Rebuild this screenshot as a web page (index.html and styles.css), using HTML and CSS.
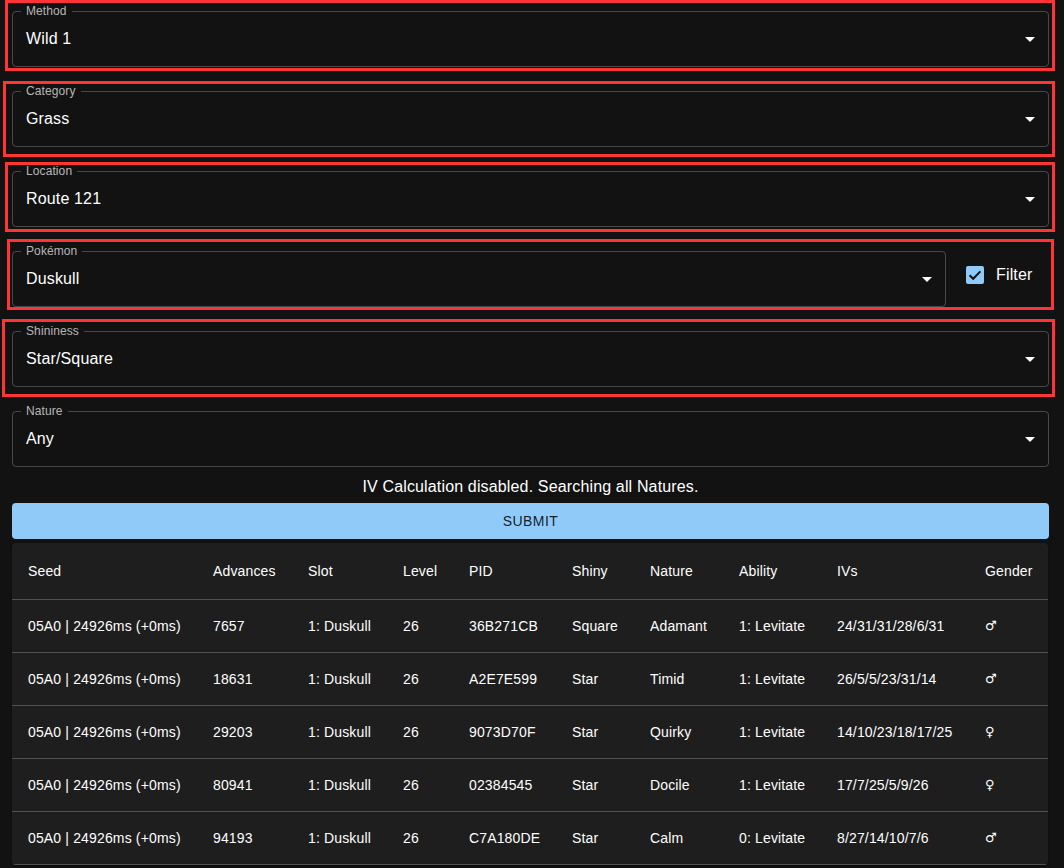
FILE: index.html
```html
<!DOCTYPE html>
<html lang="en">
<head>
<meta charset="utf-8">
<title>Wild Search</title>
<link rel="stylesheet" href="styles.css">
</head>
<body>
<main class="page">
  <div class="hl hl-1">
    <fieldset class="field">
      <legend>Method</legend>
      <div class="value">Wild 1</div>
      <svg class="arrow" viewBox="0 0 24 24"><path d="M7 10l5 5 5-5z"/></svg>
    </fieldset>
  </div>
  <div class="hl hl-2">
    <fieldset class="field">
      <legend>Category</legend>
      <div class="value">Grass</div>
      <svg class="arrow" viewBox="0 0 24 24"><path d="M7 10l5 5 5-5z"/></svg>
    </fieldset>
  </div>
  <div class="hl hl-3">
    <fieldset class="field">
      <legend>Location</legend>
      <div class="value">Route 121</div>
      <svg class="arrow" viewBox="0 0 24 24"><path d="M7 10l5 5 5-5z"/></svg>
    </fieldset>
  </div>
  <div class="hl hl-4">
    <div class="row">
      <fieldset class="field field-narrow">
        <legend>Pokémon</legend>
        <div class="value">Duskull</div>
        <svg class="arrow" viewBox="0 0 24 24"><path d="M7 10l5 5 5-5z"/></svg>
      </fieldset>
      <label class="check">
        <svg class="box" viewBox="0 0 18 18"><rect x="0" y="0" width="18" height="18" rx="2" fill="#90caf9"/><path d="M3.6 9.2l3.6 3.6 7.2-7.4" fill="none" stroke="#121212" stroke-width="2"/></svg>
        <span>Filter</span>
      </label>
    </div>
  </div>
  <div class="hl hl-5">
    <fieldset class="field">
      <legend>Shininess</legend>
      <div class="value">Star/Square</div>
      <svg class="arrow" viewBox="0 0 24 24"><path d="M7 10l5 5 5-5z"/></svg>
    </fieldset>
  </div>
  <fieldset class="field nature">
    <legend>Nature</legend>
    <div class="value">Any</div>
    <svg class="arrow" viewBox="0 0 24 24"><path d="M7 10l5 5 5-5z"/></svg>
  </fieldset>
  <p class="info">IV Calculation disabled. Searching all Natures.</p>
  <button class="submit">Submit</button>
  <div class="paper">
    <table class="results">
      <colgroup>
        <col class="c-seed"><col class="c-adv"><col class="c-slot"><col class="c-level"><col class="c-pid">
        <col class="c-shiny"><col class="c-nature"><col class="c-ability"><col class="c-ivs"><col class="c-gender">
      </colgroup>
      <thead>
        <tr><th>Seed</th><th>Advances</th><th>Slot</th><th>Level</th><th>PID</th><th>Shiny</th><th>Nature</th><th>Ability</th><th>IVs</th><th>Gender</th></tr>
      </thead>
      <tbody>
        <tr><td>05A0 | 24926ms (+0ms)</td><td>7657</td><td>1: Duskull</td><td>26</td><td>36B271CB</td><td>Square</td><td>Adamant</td><td>1: Levitate</td><td>24/31/31/28/6/31</td><td class="g">♂</td></tr>
        <tr><td>05A0 | 24926ms (+0ms)</td><td>18631</td><td>1: Duskull</td><td>26</td><td>A2E7E599</td><td>Star</td><td>Timid</td><td>1: Levitate</td><td>26/5/5/23/31/14</td><td class="g">♂</td></tr>
        <tr><td>05A0 | 24926ms (+0ms)</td><td>29203</td><td>1: Duskull</td><td>26</td><td>9073D70F</td><td>Star</td><td>Quirky</td><td>1: Levitate</td><td>14/10/23/18/17/25</td><td class="g">♀</td></tr>
        <tr><td>05A0 | 24926ms (+0ms)</td><td>80941</td><td>1: Duskull</td><td>26</td><td>02384545</td><td>Star</td><td>Docile</td><td>1: Levitate</td><td>17/7/25/5/9/26</td><td class="g">♀</td></tr>
        <tr><td>05A0 | 24926ms (+0ms)</td><td>94193</td><td>1: Duskull</td><td>26</td><td>C7A180DE</td><td>Star</td><td>Calm</td><td>0: Levitate</td><td>8/27/14/10/7/6</td><td class="g">♂</td></tr>
      </tbody>
    </table>
  </div>
</main>
</body>
</html>
```

FILE: styles.css
```css
* { box-sizing: border-box; }
html, body { margin: 0; padding: 0; background: #121212; }
body {
  color: #fff;
  font-family: "Liberation Sans", Arial, "DejaVu Sans", sans-serif;
  letter-spacing: 0.15px;
  overflow: hidden;
  height: 868px;
}
.page {
  width: 1064px;
  padding: 0 15px 0 12px;
}

/* red highlight boxes */
.hl {
  border: 3px solid #ff3434;
  margin-left: -7px;
  margin-right: -6px;
  padding-left: 4px;
  padding-right: 3px;
}
.hl-1 { padding-top: 2px; padding-bottom: 1px; }
.hl-2 { margin-top: 10px; padding-top: 1px; padding-bottom: 7px; margin-left: -9px; padding-left: 6px; }
.hl-3 { margin-top: 5px; padding-top: 0; padding-bottom: 2px; }
.hl-4 { margin-top: 7px; padding-top: 3px; padding-bottom: 0; margin-left: -5px; padding-left: 2px; margin-right: -5px; padding-right: 2px; }
.hl-5 { margin-top: 9px; padding-top: 3px; padding-bottom: 7px; margin-left: -10px; padding-left: 7px; }

/* outlined select */
.field {
  display: flex;
  align-items: center;
  height: 62px;
  margin: 0;
  padding: 0 6px 6px 13px;
  border: 1px solid rgba(255, 255, 255, 0.23);
  border-radius: 4px;
  min-width: 0;
}
.field legend {
  font-size: 12px;
  line-height: 12px;
  letter-spacing: 0.1px;
  color: rgba(255, 255, 255, 0.7);
  padding: 0 5px;
  margin-left: -5px;
}
.value {
  flex: 1;
  font-size: 16px;
  line-height: 23px;
  color: #fff;
}
.arrow {
  width: 24px;
  height: 24px;
  fill: #fff;
  flex: none;
  margin-top: 1px;
}
.nature { margin-top: 8px; }

.row {
  display: flex;
  align-items: center;
}
.field-narrow { width: 934px; flex: none; }
.check {
  display: flex;
  align-items: center;
  margin-left: 20px;
  margin-top: -2px;
  font-size: 16px;
}
.check .box { width: 18px; height: 18px; }
.check span { margin-left: 12px; }

.info {
  margin: 8px 0 4px;
  text-align: center;
  font-size: 16px;
  line-height: 24px;
}
.submit {
  display: block;
  width: 100%;
  height: 36px;
  border: 0;
  border-radius: 4px;
  background: #90caf9;
  color: rgba(0, 0, 0, 0.87);
  font-family: inherit;
  font-size: 14px;
  letter-spacing: 0.4px;
  text-transform: uppercase;
  padding: 0;
}

.paper {
  margin-top: 4px;
  width: 1036px;
  background: #1e1e1e;
  border-radius: 4px;
  overflow: hidden;
  box-shadow: 0 2px 1px -1px rgba(0,0,0,.2), 0 1px 1px rgba(0,0,0,.14), 0 1px 3px rgba(0,0,0,.12);
}
.results {
  width: 1036px;
  table-layout: fixed;
  border-collapse: collapse;
  font-size: 14px;
}
.results th, .results td {
  text-align: left;
  padding: 0 16px;
  border-bottom: 1px solid #515151;
  white-space: nowrap;
  color: #fff;
  font-weight: normal;
}
.results th { height: 56px; }
.results td { height: 53px; }
.results td.g { font-family: "DejaVu Sans", sans-serif; font-size: 13px; }
.c-seed { width: 185px; }
.c-adv { width: 95px; }
.c-slot { width: 95px; }
.c-level { width: 66px; }
.c-pid { width: 103px; }
.c-shiny { width: 78px; }
.c-nature { width: 89px; }
.c-ability { width: 98px; }
.c-ivs { width: 148px; }
.c-gender { width: 79px; }
```
